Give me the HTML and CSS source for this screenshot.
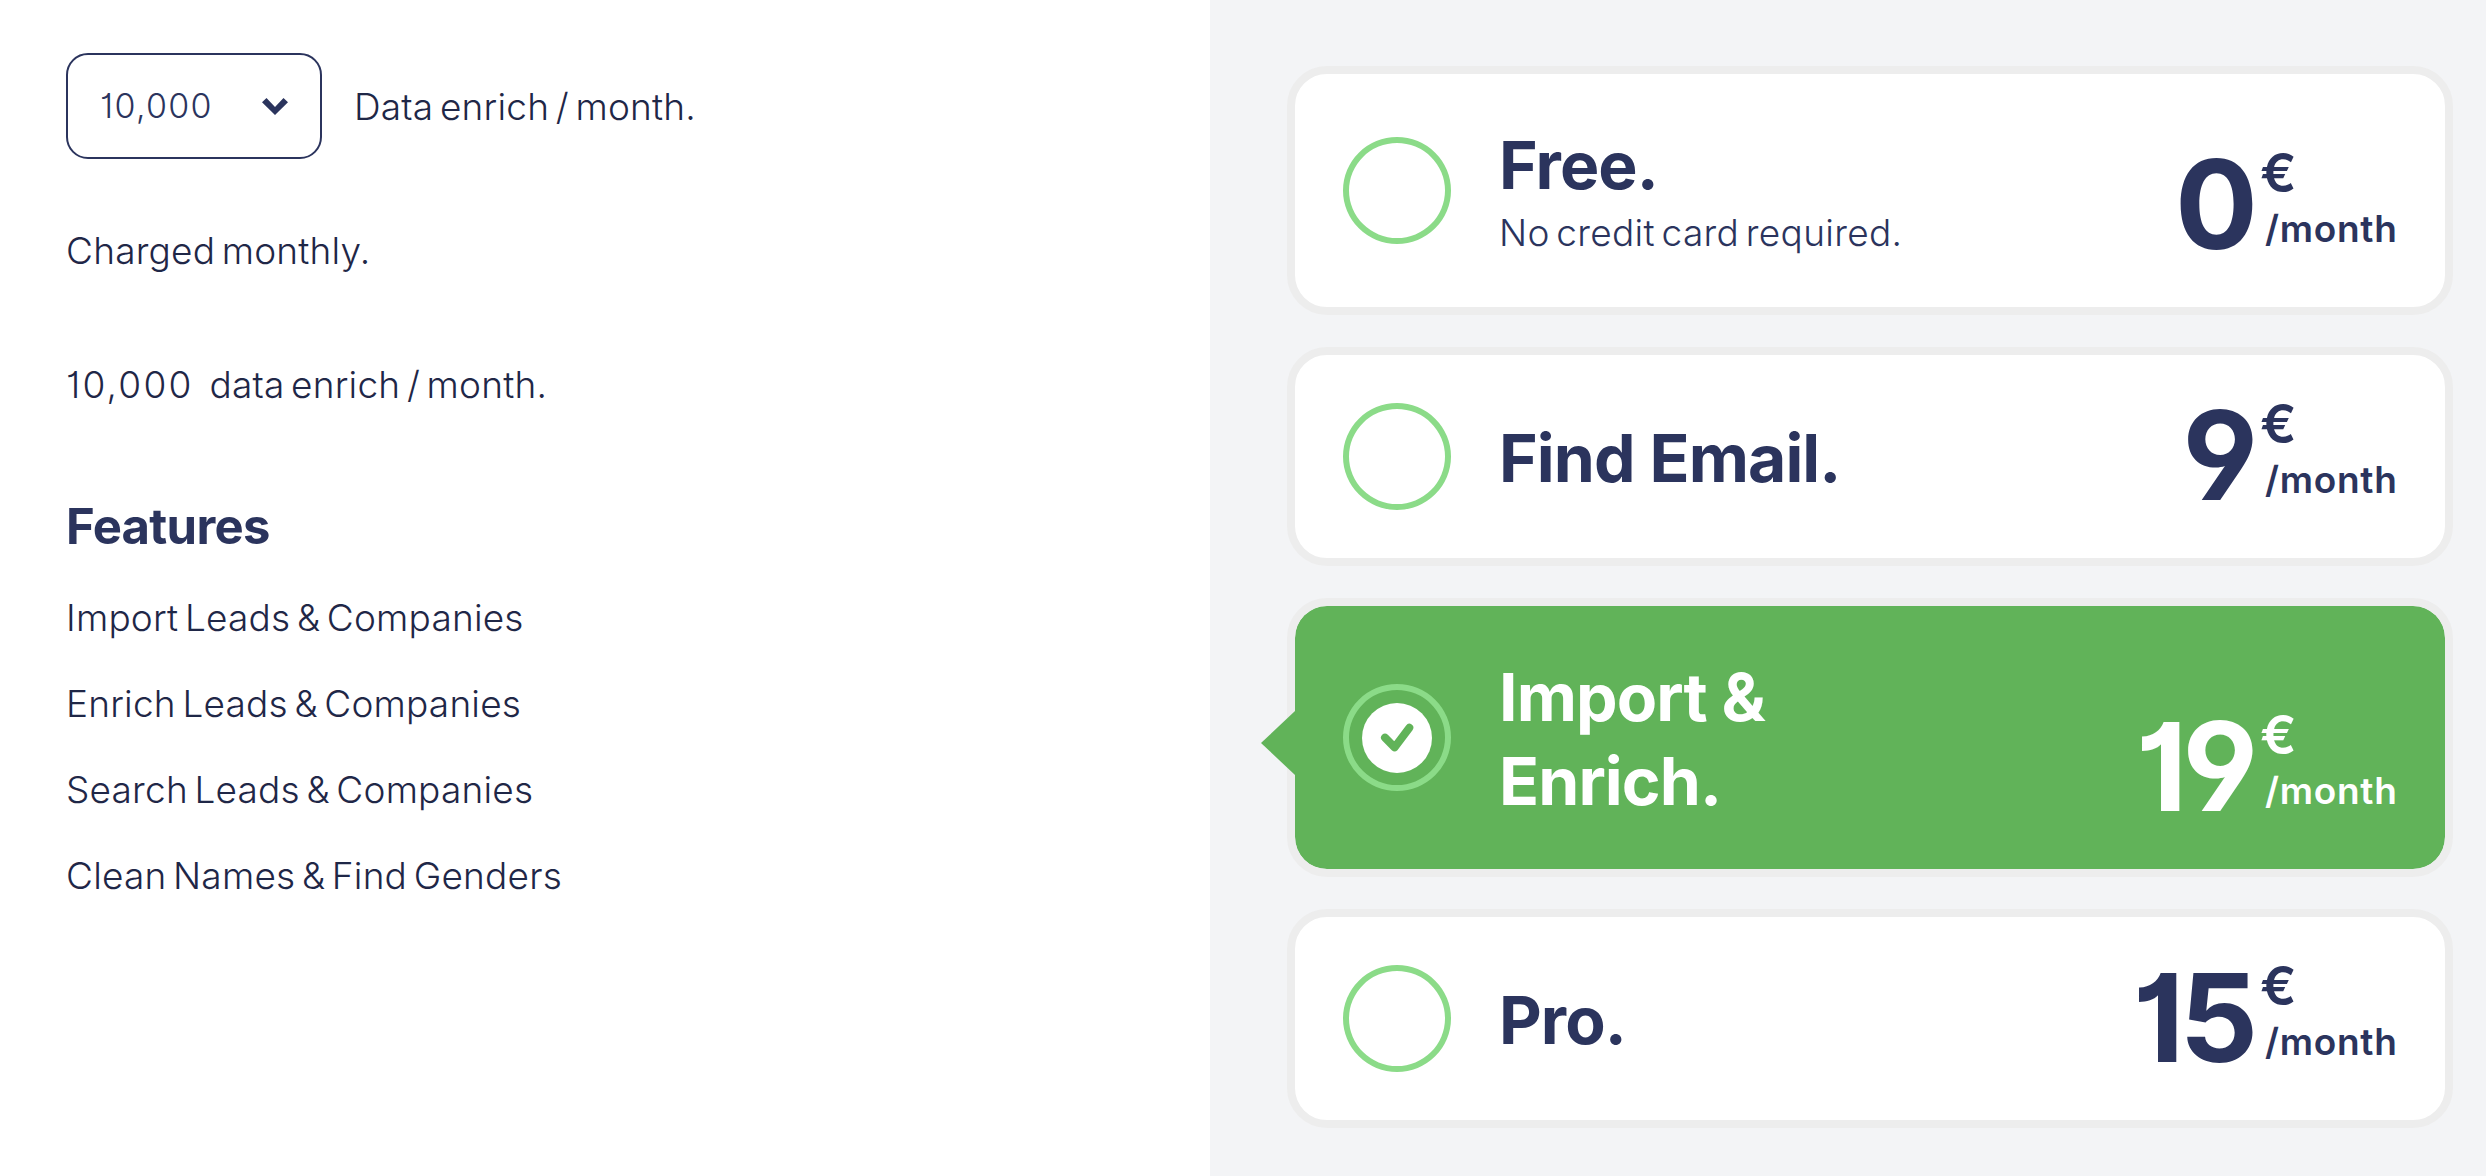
FILE: index.html
```
<!DOCTYPE html>
<html lang="en">
<head>
  <meta charset="UTF-8">
  <meta name="viewport" content="width=device-width, initial-scale=1.0">
  <title>Pricing</title>
  <link rel="stylesheet" href="styles.css">
</head>
<body>
  <div class="pricing">

    <!-- Plan details -->
    <section class="details">
      <div class="quota">
        <button class="select" type="button">
          <span>10,000</span>
          <svg class="chevron" width="26" height="17" viewBox="0 0 26 17">
            <path d="M0 4.3 4.5 0 13 9 21.5 0 26 4.3 13 17z" fill="#2b345d"/>
          </svg>
        </button>
        <span class="label">Data enrich / month.</span>
      </div>
      <p class="charged">Charged monthly.</p>
      <p class="summary"><span class="number">10,000</span><span>data enrich / month.</span></p>
      <h2>Features</h2>
      <ul class="features">
        <li>Import Leads &amp; Companies</li>
        <li>Enrich Leads &amp; Companies</li>
        <li>Search Leads &amp; Companies</li>
        <li>Clean Names &amp; Find Genders</li>
      </ul>
    </section>

    <!-- Plans -->
    <section class="plans">
      <div class="plan">
        <span class="radio"></span>
        <div class="info">
          <h3>Free.</h3>
          <p>No credit card required.</p>
        </div>
        <div class="price">
          <span class="amount">0</span>
          <div class="unit"><span class="currency">€</span><span class="period">/month</span></div>
        </div>
      </div>

      <div class="plan">
        <span class="radio"></span>
        <div class="info">
          <h3>Find Email.</h3>
        </div>
        <div class="price">
          <span class="amount">9</span>
          <div class="unit"><span class="currency">€</span><span class="period">/month</span></div>
        </div>
      </div>

      <div class="plan selected">
        <span class="radio">
          <svg width="70" height="70" viewBox="0 0 70 70">
            <circle cx="35" cy="35" r="35" fill="#fff"/>
            <path d="M23 34.7 32.6 44.3 47.3 24.8" fill="none" stroke="#61b359" stroke-width="8" stroke-linecap="round" stroke-linejoin="round"/>
          </svg>
        </span>
        <div class="info">
          <h3>Import &amp;<br>Enrich.</h3>
        </div>
        <div class="price">
          <span class="amount">19</span>
          <div class="unit"><span class="currency">€</span><span class="period">/month</span></div>
        </div>
      </div>

      <div class="plan">
        <span class="radio"></span>
        <div class="info">
          <h3>Pro.</h3>
        </div>
        <div class="price">
          <span class="amount">15</span>
          <div class="unit"><span class="currency">€</span><span class="period">/month</span></div>
        </div>
      </div>
    </section>

  </div>
</body>
</html>
```
FILE: styles.css
```
* {
  box-sizing: border-box;
}
body {
  margin: 0;
  font-family: Inter, sans-serif;
  font-size: 37px;
  font-weight: 300;
  line-height: 60px;
  letter-spacing: 0.2px;
  word-spacing: -4px;
  color: #1f2747;
  background-color: #fff;
}
h2, h3, p, ul {
  margin: 0;
  padding: 0;
}
.pricing {
  display: flex;
  height: 1176px;
}

/* Left column */
.details {
  width: 1210px;
  padding: 53px 66px;
}
.quota {
  display: flex;
  align-items: center;
  gap: 32px;
}
.select {
  display: flex;
  align-items: center;
  justify-content: space-between;
  width: 256px;
  height: 106px;
  padding: 0 32px;
  border: 2px solid #2b345d;
  border-radius: 22px;
  background: none;
  font: inherit;
  font-size: 34px;
  letter-spacing: 1.3px;
  font-feature-settings: "cv01";
  color: #2b345d;
}
.label {
  padding-top: 2px;
}
.number {
  letter-spacing: 2.2px;
  font-feature-settings: "cv01";
}
.charged {
  margin-top: 62px;
}
.summary {
  display: flex;
  gap: 16px;
  margin-top: 74px;
}
h2 {
  margin-top: 82px;
  font-size: 49px;
  font-weight: 650;
  letter-spacing: -0.7px;
  color: #2b345d;
}
.features {
  display: flex;
  flex-direction: column;
  gap: 26px;
  margin-top: 31px;
  list-style: none;
}

/* Right column */
.plans {
  display: flex;
  flex-direction: column;
  flex: 1;
  gap: 32px;
  padding: 66px 33px 48px 77px;
  background-color: #f3f4f6;
}
.plan {
  position: relative;
  display: flex;
  align-items: center;
  padding: 48px;
  border: 8px solid #ededed;
  border-radius: 40px;
  background-color: #fff;
  color: #2b345d;
}
.radio {
  display: flex;
  align-items: center;
  justify-content: center;
  width: 108px;
  height: 107px;
  border: 6px solid #8bdb88;
  border-radius: 50%;
}
.info {
  flex: 1;
  margin-left: 48px;
}
h3 {
  margin: 2px 0 -2px;
  font-size: 66px;
  font-weight: 650;
  line-height: 83.5px;
  letter-spacing: -0.9px;
  word-spacing: 0;
}
.info p {
  line-height: 53.5px;
  letter-spacing: 0.3px;
}
.price {
  display: flex;
  align-items: flex-end;
  align-self: flex-end;
}
.amount {
  margin-bottom: 1px;
  font-size: 123px;
  font-weight: 650;
  line-height: 106px;
  letter-spacing: -5px;
  font-feature-settings: "cv01", "cv04";
}
.unit {
  display: flex;
  flex-direction: column;
  width: 137px;
  margin-left: 7px;
}
.currency {
  margin-top: -6px;
  font-size: 54px;
  font-weight: 600;
  line-height: 51px;
}
.period {
  margin-left: 5px;
  font-weight: 600;
  line-height: 61px;
  letter-spacing: 0.7px;
}

/* Selected plan */
.selected {
  background-color: #61b359;
  background-clip: padding-box;
  color: #fff;
}
.selected::before {
  content: "";
  position: absolute;
  top: 105px;
  left: -34px;
  border: solid transparent;
  border-width: 32px 34px 32px 0;
  border-right-color: #61b359;
}
```
